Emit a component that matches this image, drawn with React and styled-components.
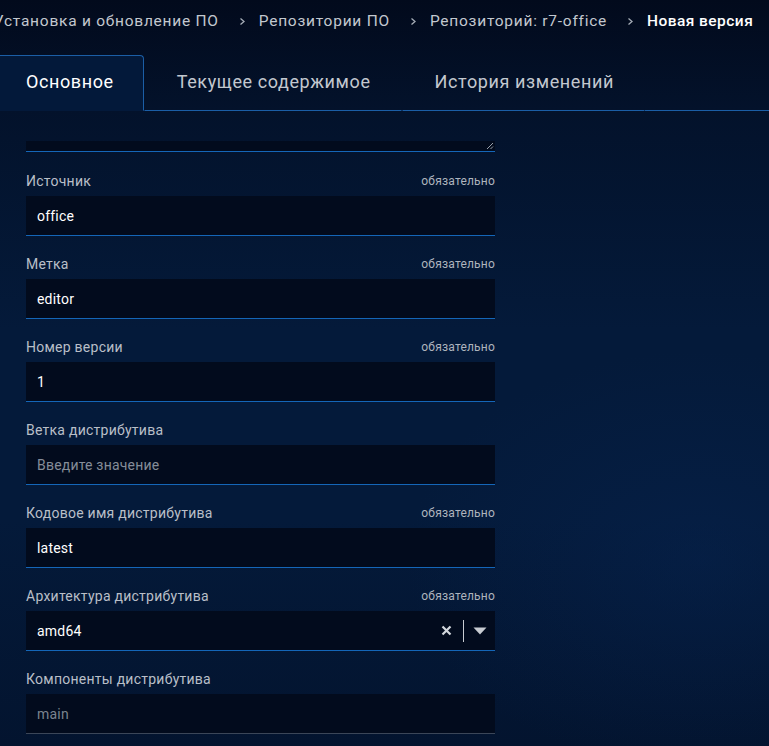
import React from "react";
import styled, { createGlobalStyle } from "styled-components";

const Global = createGlobalStyle`
  html, body {
    margin: 0;
    padding: 0;
    background: #03112a;
  }
  body {
    font-family: Roboto, "Noto Sans", "Liberation Sans", sans-serif;
    overflow: hidden;
  }
`;

const Page = styled.div`
  width: 769px;
  height: 746px;
  overflow: hidden;
  background:
    radial-gradient(ellipse 420px 300px at 700px 560px, rgba(8, 40, 90, 0.35), transparent 70%),
    linear-gradient(180deg, #020a1c 0px, #03122b 110px, #041a3a 330px, #041a3a 520px, #03142f 746px);
  color: #c9cdd4;
`;

const Shift = styled.div`
  margin-left: -4px;
`;

const Breadcrumbs = styled.nav`
  height: 44px;
  display: flex;
  align-items: center;
  margin-left: -2px;
  font-size: 15.5px;
  letter-spacing: 0.75px;
  white-space: nowrap;
  padding-bottom: 2px;
  box-sizing: border-box;
`;

const Crumb = styled.span`
  color: ${(p) => (p.current ? "#ffffff" : "#c3c8cf")};
  font-weight: ${(p) => (p.current ? 500 : 400)};
  letter-spacing: ${(p) => (p.current ? "0.45px" : "inherit")};
`;

const Sep = styled.span`
  display: inline-flex;
  align-items: center;
  margin: 0 13px 0 20px;
  color: #9aa1ab;
`;

const Tabs = styled.div`
  margin-top: 11px;
  display: flex;
  height: 56px;
  box-sizing: border-box;
`;

const Tab = styled.div`
  display: flex;
  align-items: center;
  padding: ${(p) => (p.active ? "0 29px" : "0 30px 0 32px")};
  font-size: 18px;
  letter-spacing: 0.6px;
  box-sizing: border-box;
  color: ${(p) => (p.active ? "#ffffff" : "#c3c8cf")};
  background: ${(p) => (p.active ? "#03193a" : "transparent")};
  border: 1px solid ${(p) => (p.active ? "#1b5ea6" : "transparent")};
  border-bottom: 1px solid ${(p) => (p.active ? "transparent" : "#1b5ea6")};
  border-top-right-radius: 4px;
  border-top-left-radius: 4px;
  padding-bottom: 3px;
`;

const TabFill = styled.div`
  flex: 1;
  border-bottom: 1px solid #1b5ea6;
`;

const Form = styled.div`
  width: 469px;
  margin-left: 30px;
  padding-top: 30px;
  display: flex;
  flex-direction: column;
`;

const TextareaStub = styled.div`
  height: 10px;
  background: #020b1d;
  border-bottom: 1px solid #1466b8;
  display: flex;
  justify-content: flex-end;
  align-items: flex-end;
  margin-bottom: 19px;
`;

const Field = styled.div`
  display: flex;
  flex-direction: column;
  margin-bottom: 18px;
`;

const LabelRow = styled.div`
  height: 20px;
  display: flex;
  justify-content: space-between;
  align-items: center;
  margin-bottom: 5px;
`;

const Label = styled.span`
  font-size: 14px;
  letter-spacing: 0.25px;
  color: #b9bfc8;
`;

const Required = styled.span`
  font-size: 12px;
  letter-spacing: 0.2px;
  color: #aeb4bd;
`;

const InputBox = styled.div`
  height: 39px;
  background: #020b1d;
  border-bottom: 1px solid ${(p) => (p.disabled ? "#3b4658" : "#1466b8")};
  display: flex;
  align-items: center;
  padding: 0 8px 0 11px;
  font-size: 14px;
  letter-spacing: 0.2px;
  color: ${(p) => (p.placeholder ? "#858d99" : p.disabled ? "#7b838f" : "#ffffff")};
`;

const Value = styled.span`
  flex: 1;
`;

const SelectTools = styled.div`
  display: flex;
  align-items: center;
`;

const Divider = styled.span`
  width: 1px;
  height: 22px;
  background: #c8ccd2;
  margin: 0 9px 0 11px;
`;

const Chevron = () => (
  <svg width="7" height="9" viewBox="0 0 7 9">
    <path d="M1.5 1.5 L5 4.5 L1.5 7.5" fill="none" stroke="#a6adb7" strokeWidth="1.3" />
  </svg>
);

const fields = [
  { label: "Источник", value: "office", required: true },
  { label: "Метка", value: "editor", required: true },
  { label: "Номер версии", value: "1", required: true },
  { label: "Ветка дистрибутива", value: "Введите значение", placeholder: true },
  { label: "Кодовое имя дистрибутива", value: "latest", required: true },
  { label: "Архитектура дистрибутива", value: "amd64", required: true, select: true },
  { label: "Компоненты дистрибутива", value: "main", disabled: true },
];

const crumbs = [
  "Установка и обновление ПО",
  "Репозитории ПО",
  "Репозиторий: r7-office",
];

export default function App() {
  return (
    <Page>
      <Global />
      <Shift>
        <Breadcrumbs>
          {crumbs.map((c) => (
            <React.Fragment key={c}>
              <Crumb>{c}</Crumb>
              <Sep>
                <Chevron />
              </Sep>
            </React.Fragment>
          ))}
          <Crumb current>Новая версия</Crumb>
        </Breadcrumbs>
        <Tabs>
          <Tab active>Основное</Tab>
          <Tab>Текущее содержимое</Tab>
          <Tab>История изменений</Tab>
          <TabFill />
        </Tabs>
        <Form>
          <TextareaStub>
            <svg width="9" height="9" viewBox="0 0 9 9" style={{ marginRight: 1, marginBottom: 1 }}>
              <path d="M8 2 L2 8 M8 5.5 L5.5 8" stroke="#9aa1ab" strokeWidth="1" />
            </svg>
          </TextareaStub>
          {fields.map((f) => (
            <Field key={f.label}>
              <LabelRow>
                <Label>{f.label}</Label>
                {f.required && <Required>обязательно</Required>}
              </LabelRow>
              <InputBox placeholder={f.placeholder ? 1 : 0} disabled={f.disabled}>
                <Value>{f.value}</Value>
                {f.select && (
                  <SelectTools>
                    <svg width="11" height="11" viewBox="0 0 11 11">
                      <path d="M1.5 1.5 L9.5 9.5 M9.5 1.5 L1.5 9.5" stroke="#d4d8de" strokeWidth="2.2" />
                    </svg>
                    <Divider />
                    <svg width="14" height="8" viewBox="0 0 14 8">
                      <path d="M0.5 0.5 H13.5 L7 7.5 Z" fill="#c8ccd2" />
                    </svg>
                  </SelectTools>
                )}
              </InputBox>
            </Field>
          ))}
        </Form>
      </Shift>
    </Page>
  );
}
